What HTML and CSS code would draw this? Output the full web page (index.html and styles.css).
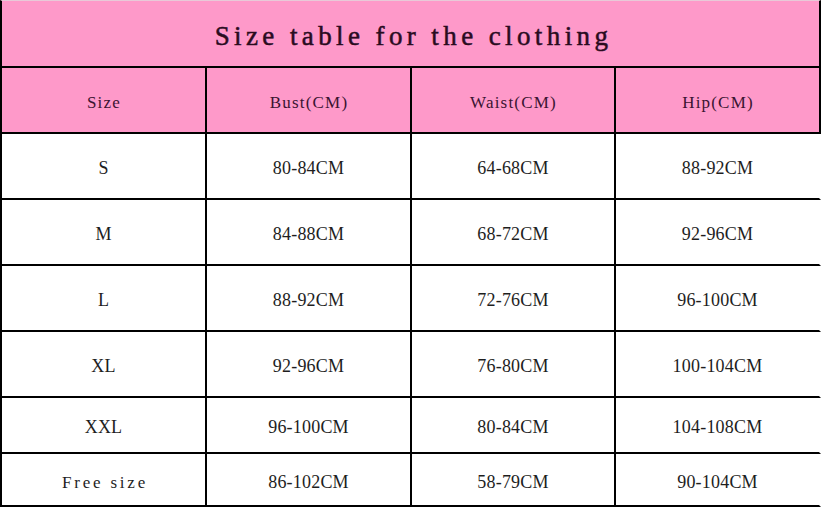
FILE: index.html
```html
<!DOCTYPE html>
<html>
<head>
<meta charset="utf-8">
<link rel="stylesheet" href="styles.css">
</head>
<body>
<div class="sheet">
  <div class="title">Size table for the clothing</div>
  <div class="grid head">
    <div class="cell">Size</div>
    <div class="cell">Bust(CM)</div>
    <div class="cell">Waist(CM)</div>
    <div class="cell">Hip(CM)</div>
  </div>
  <div class="grid row">
    <div class="cell">S</div><div class="cell">80-84CM</div><div class="cell">64-68CM</div><div class="cell">88-92CM</div>
  </div>
  <div class="grid row">
    <div class="cell">M</div><div class="cell">84-88CM</div><div class="cell">68-72CM</div><div class="cell">92-96CM</div>
  </div>
  <div class="grid row">
    <div class="cell">L</div><div class="cell">88-92CM</div><div class="cell">72-76CM</div><div class="cell">96-100CM</div>
  </div>
  <div class="grid row">
    <div class="cell">XL</div><div class="cell">92-96CM</div><div class="cell">76-80CM</div><div class="cell">100-104CM</div>
  </div>
  <div class="grid row row-short">
    <div class="cell">XXL</div><div class="cell">96-100CM</div><div class="cell">80-84CM</div><div class="cell">104-108CM</div>
  </div>
  <div class="grid row row-last">
    <div class="cell free">Free size</div><div class="cell">86-102CM</div><div class="cell">58-79CM</div><div class="cell">90-104CM</div>
  </div>
</div>
</body>
</html>
```

FILE: styles.css
```css
html, body {
  margin: 0;
  padding: 0;
  background: #ffffff;
}

.sheet {
  width: 821px;
  height: 507px;
  font-family: "Liberation Serif", "DejaVu Serif", serif;
  color: #1e1e1e;
  overflow: hidden;
}

.title {
  box-sizing: border-box;
  height: 68px;
  background: #fe99c9;
  border-top: 1px solid #e9c9d8;
  border-left: 2px solid #000;
  border-right: 2px solid #000;
  border-bottom: 2px solid #000;
  display: flex;
  align-items: center;
  justify-content: center;
  padding-top: 6px;
  padding-left: 6px;
  font-size: 27px;
  color: #2a0b1f;
  letter-spacing: 4.4px;
  -webkit-text-stroke: 0.5px #2a0b1f;
}

.grid {
  display: grid;
  grid-template-columns: 205px 205px 204px 205px;
  border-left: 2px solid #000;
}

.cell {
  box-sizing: border-box;
  border-right: 2px solid #000;
  border-bottom: 2px solid #000;
  display: flex;
  align-items: center;
  justify-content: center;
}

.head .cell {
  height: 66px;
  background: #fe99c9;
  font-size: 17px;
  letter-spacing: 1.2px;
  color: #3a1431;
  padding-top: 5px;
  padding-left: 1px;
}

.row .cell {
  height: 66px;
  font-size: 18px;
  color: #1e1e1e;
  letter-spacing: 0.2px;
  padding-top: 4px;
}

.row .cell:last-child {
  border-right-color: transparent;
}

.row-short .cell {
  height: 56px;
}

.row-last .cell {
  height: 53px;
  padding-top: 6px;
}

.row .free {
  font-size: 17px;
  letter-spacing: 2.8px;
  padding-left: 3px;
}
```
